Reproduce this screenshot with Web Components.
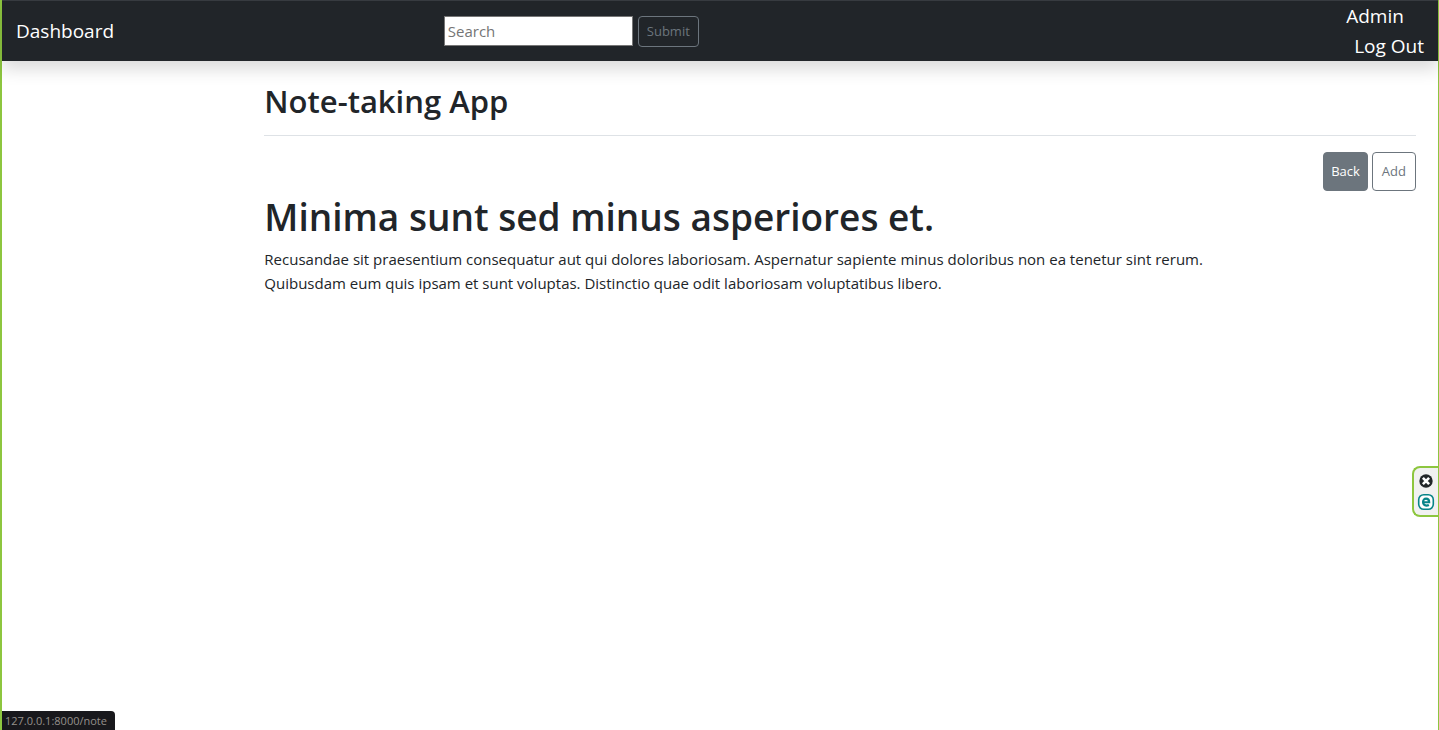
<!DOCTYPE html>
<html lang="en">
<head>
<meta charset="utf-8">
<meta name="viewport" content="width=device-width, initial-scale=1">
<title>Note-taking App</title>
<style>
html,body{margin:0;height:100%}
body{font:400 15px/24px "Open Sans","Noto Sans",sans-serif;color:#212529;background:#fff}
</style>
</head>
<body>
<note-app>
  <site-header slot="header"></site-header>
  <page-title>Note-taking App</page-title>
  <note-actions></note-actions>
  <note-article>
    <span slot="title">Minima sunt sed minus asperiores et.</span>
    Recusandae sit praesentium consequatur aut qui dolores laboriosam. Aspernatur sapiente minus doloribus non ea tenetur sint rerum. Quibusdam eum quis ipsam et sunt voluptas. Distinctio quae odit laboriosam voluptatibus libero.
  </note-article>
  <side-widget slot="overlay"></side-widget>
  <link-status slot="overlay">127.0.0.1:8000/note</link-status>
</note-app>
<script>
const define = (name, html) => customElements.define(name, class extends HTMLElement {
  constructor() {
    super();
    const t = document.createElement('template');
    t.innerHTML = '<style>*{box-sizing:border-box}</style>' + html;
    this.attachShadow({mode: 'open'}).append(t.content.cloneNode(true));
  }
});

define('note-app', `<style>
:host{display:block;box-sizing:border-box;min-height:100%;border:solid #8dc63f;border-width:0 1px 0 2px}
main{margin-left:16.6667%;padding:0 22px 24px 23px}
</style>
<slot name="header"></slot><main><slot></slot></main><slot name="overlay"></slot>`);

define('site-header', `<style>
:host{display:block}
header{display:flex;align-items:center;background:#212529;border-top:1px solid #373b40;box-shadow:0 8px 16px rgba(0,0,0,.15);font-size:19px;line-height:30px;color:#fff}
a{color:inherit;text-decoration:none}
.brand{width:16.6667%;padding-left:14px}
form{display:flex;align-items:center;gap:5px;margin-left:14.1%}
input{width:189px;height:30px;padding:1px 3px;border:1px solid #767676;border-radius:0;background:#fff;font:15px/24px "Open Sans",sans-serif}
input::placeholder{color:#757575}
form button{height:31px;padding:0 8px;border:1px solid #6c757d;border-radius:4px;background:none;color:#6c757d;font:13px/21px "Open Sans",sans-serif}
nav{display:flex;flex-direction:column;margin-left:auto;padding-right:14px}
</style>
<header><a class="brand" href="#">Dashboard</a>
<form><input type="search" placeholder="Search" aria-label="Search"><button type="button">Submit</button></form>
<nav><a href="#">Admin</a><a href="#" style="padding-left:8px">Log Out</a></nav></header>`);

define('page-title', `<style>
:host{display:block;padding:21px 0 15px;margin-bottom:16px;border-bottom:1px solid #dee2e6}
h1{margin:0;font-size:31px;line-height:38px;font-weight:600}
</style><h1><slot></slot></h1>`);

define('note-actions', `<style>
:host{display:flex;justify-content:flex-end;gap:4px;margin-bottom:2px}
button{height:39px;padding:0 9px;border:1px solid #6c757d;border-radius:4px;background:none;color:#6c757d;font:13px/21px "Open Sans",sans-serif}
.on{padding:0 7px;background:#6c757d;color:#fff}
</style><button class="on" type="button">Back</button><button type="button">Add</button>`);

define('note-article', `<style>
:host{display:block}
h2{margin:0 0 6px;font-size:37px;line-height:48px;font-weight:600}
p{margin:0;max-width:960px}
</style><h2><slot name="title"></slot></h2><p><slot></slot></p>`);

define('side-widget', `<style>
:host{position:fixed;right:1px;top:466px;display:flex;flex-direction:column;align-items:center;gap:5px;box-sizing:border-box;width:26px;height:51px;padding:6px 0 0;border:2px solid #8dc63f;border-right:0;border-radius:8px 0 0 8px;background:#f1f1f1}
button{display:block;padding:0;border:0;background:none}
svg{display:block}
</style>
<button type="button" aria-label="Close"><svg width="14" height="14" viewBox="0 0 14 14"><circle cx="7" cy="7" r="6.7" fill="#222629"/><path d="M3.900 3.900l6.200 6.200m0-6.200l-6.200 6.200" stroke="#fff" stroke-width="2.600"/></svg></button>
<button type="button" aria-label="Open extension"><svg width="18" height="18" viewBox="0 0 18 18"><rect x="1.700" y="1.700" width="14.600" height="14.600" rx="5" fill="#fff" stroke="#078489" stroke-width="1.600"/><path d="M6 9.200h6.200c0-2.400-1.100-3.600-3.100-3.600S6 7 6 9.100s1.200 3.500 3.300 3.500c1.100 0 1.900-.2 2.600-.6" fill="none" stroke="#078489" stroke-width="2.100"/></svg></button>`);

define('link-status', `<style>
:host{position:fixed;left:2px;bottom:0;padding:2px 8px 1px 3px;border-top-right-radius:4px;background:#18181c;color:#96918c;font-size:11px;line-height:16px}
</style><slot></slot>`);
</script>
</body>
</html>
